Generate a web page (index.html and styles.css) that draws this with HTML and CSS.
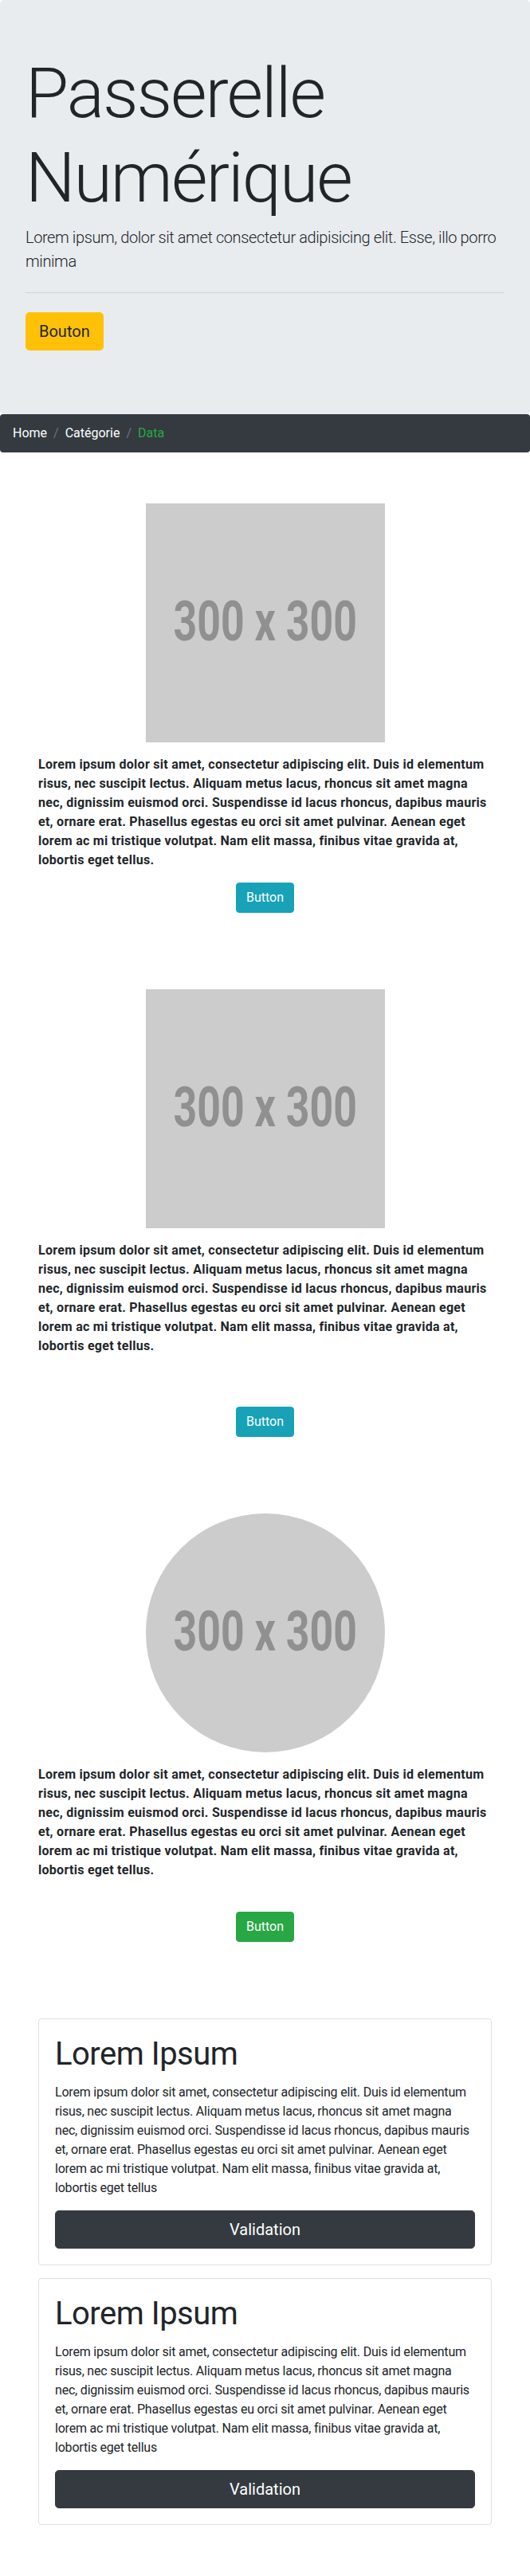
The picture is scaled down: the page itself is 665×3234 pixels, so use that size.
FILE: index.html
```html
<!DOCTYPE html>
<html lang="fr">
<head>
<meta charset="utf-8">
<title>Passerelle Numérique</title>
<link rel="stylesheet" href="styles.css">
</head>
<body>
  <header class="jumbotron">
    <h1 class="display-title">Passerelle Numérique</h1>
    <p class="lead">Lorem ipsum, dolor sit amet consectetur adipisicing elit. Esse, illo porro minima</p>
    <hr class="divider">
    <p class="lead-action"><a class="btn btn-lg btn-warning" href="#">Bouton</a></p>
  </header>

  <nav class="breadcrumb">
    <a class="crumb" href="#">Home</a>
    <a class="crumb" href="#">Catégorie</a>
    <span class="crumb crumb-active">Data</span>
  </nav>

  <section class="feature">
    <div class="placeholder"><span class="placeholder-text">300 x 300</span></div>
    <p class="feature-text">Lorem ipsum dolor sit amet, consectetur adipiscing elit. Duis id elementum risus, nec suscipit lectus. Aliquam metus lacus, rhoncus sit amet magna nec, dignissim euismod orci. Suspendisse id lacus rhoncus, dapibus mauris et, ornare erat. Phasellus egestas eu orci sit amet pulvinar. Aenean eget lorem ac mi tristique volutpat. Nam elit massa, finibus vitae gravida at, lobortis eget tellus.</p>
    <div class="feature-action"><a class="btn btn-info" href="#">Button</a></div>
  </section>

  <section class="feature">
    <div class="placeholder"><span class="placeholder-text">300 x 300</span></div>
    <p class="feature-text">Lorem ipsum dolor sit amet, consectetur adipiscing elit. Duis id elementum risus, nec suscipit lectus. Aliquam metus lacus, rhoncus sit amet magna nec, dignissim euismod orci. Suspendisse id lacus rhoncus, dapibus mauris et, ornare erat. Phasellus egestas eu orci sit amet pulvinar. Aenean eget lorem ac mi tristique volutpat. Nam elit massa, finibus vitae gravida at, lobortis eget tellus.</p>
    <div class="feature-action feature-action-lg"><a class="btn btn-info" href="#">Button</a></div>
  </section>

  <section class="feature">
    <div class="placeholder placeholder-round"><span class="placeholder-text">300 x 300</span></div>
    <p class="feature-text">Lorem ipsum dolor sit amet, consectetur adipiscing elit. Duis id elementum risus, nec suscipit lectus. Aliquam metus lacus, rhoncus sit amet magna nec, dignissim euismod orci. Suspendisse id lacus rhoncus, dapibus mauris et, ornare erat. Phasellus egestas eu orci sit amet pulvinar. Aenean eget lorem ac mi tristique volutpat. Nam elit massa, finibus vitae gravida at, lobortis eget tellus.</p>
    <div class="feature-action feature-action-md"><a class="btn btn-success" href="#">Button</a></div>
  </section>

  <section class="cards">
    <article class="card">
      <h1 class="card-title">Lorem Ipsum</h1>
      <p class="card-text">Lorem ipsum dolor sit amet, consectetur adipiscing elit. Duis id elementum risus, nec suscipit lectus. Aliquam metus lacus, rhoncus sit amet magna nec, dignissim euismod orci. Suspendisse id lacus rhoncus, dapibus mauris et, ornare erat. Phasellus egestas eu orci sit amet pulvinar. Aenean eget lorem ac mi tristique volutpat. Nam elit massa, finibus vitae gravida at, lobortis eget tellus</p>
      <a class="btn btn-lg btn-dark btn-block" href="#">Validation</a>
    </article>
    <article class="card">
      <h1 class="card-title">Lorem Ipsum</h1>
      <p class="card-text">Lorem ipsum dolor sit amet, consectetur adipiscing elit. Duis id elementum risus, nec suscipit lectus. Aliquam metus lacus, rhoncus sit amet magna nec, dignissim euismod orci. Suspendisse id lacus rhoncus, dapibus mauris et, ornare erat. Phasellus egestas eu orci sit amet pulvinar. Aenean eget lorem ac mi tristique volutpat. Nam elit massa, finibus vitae gravida at, lobortis eget tellus</p>
      <a class="btn btn-lg btn-dark btn-block" href="#">Validation</a>
    </article>
  </section>
</body>
</html>
```
FILE: styles.css
```css
* { box-sizing: border-box; }

body {
  margin: 0;
  font-family: Roboto, "Liberation Sans", Arial, sans-serif;
  font-size: 16px;
  line-height: 1.5;
  color: #212529;
  background: #fff;
}

/* ---------- jumbotron ---------- */
.jumbotron {
  background: #e9ecef;
  padding: 64px 32px;
  border-radius: 4.8px;
}
.display-title {
  margin: 0 0 8px;
  font-size: 88px;
  font-weight: 300;
  line-height: 1.2;
  letter-spacing: -2px;
}
.lead {
  margin: 0;
  font-size: 20px;
  font-weight: 300;
  line-height: 30px;
  letter-spacing: -0.4px;
}
.divider {
  margin: 24px 0;
  border: 0;
  border-top: 1px solid rgba(0, 0, 0, 0.1);
}
.lead-action {
  margin: 0 0 16px;
  font-size: 20px;
  line-height: 30px;
}

/* ---------- buttons ---------- */
.btn {
  display: inline-block;
  padding: 6px 12px;
  font-size: 16px;
  line-height: 24px;
  font-weight: 400;
  text-align: center;
  text-decoration: none;
  border: 1px solid transparent;
  border-radius: 4px;
  color: #fff;
}
.btn-lg {
  padding: 8px 16px;
  font-size: 20px;
  line-height: 30px;
  border-radius: 4.8px;
}
.btn-block { display: block; width: 100%; }
.btn-warning { background: #ffc107; border-color: #ffc107; color: #212529; }
.btn-info { background: #17a2b8; border-color: #17a2b8; }
.btn-success { background: #28a745; border-color: #28a745; }
.btn-dark { background: #343a40; border-color: #343a40; }

/* ---------- breadcrumb ---------- */
.breadcrumb {
  display: flex;
  flex-wrap: wrap;
  margin: 0 0 16px;
  padding: 12px 16px;
  background: #343a40;
  border-radius: 4px;
  line-height: 24px;
}
.crumb { color: #fff; text-decoration: none; }
.crumb + .crumb { padding-left: 8px; }
.crumb + .crumb::before {
  content: "/";
  display: inline-block;
  padding-right: 8px;
  color: #6c757d;
}
.crumb-active { color: #28a745; }

/* ---------- feature sections ---------- */
.feature {
  padding: 48px 48px;
  text-align: center;
}
.placeholder {
  display: flex;
  align-items: center;
  justify-content: center;
  width: 300px;
  height: 300px;
  margin: 0 auto 16px;
  background: #cccccc;
  overflow: hidden;
}
.placeholder-round { border-radius: 50%; }
.placeholder-text {
  display: inline-block;
  margin-top: -4px;
  font-family: Roboto, "Liberation Sans", sans-serif;
  font-size: 70px;
  font-weight: 700;
  line-height: 1;
  color: #909090;
  white-space: nowrap;
  transform: scaleX(0.74);
}
.feature-text {
  margin: 0 0 16px;
  text-align: left;
  font-weight: 700;
  letter-spacing: 0.28px;
}
.feature-action-lg { padding-top: 48px; }
.feature-action-md { padding-top: 24px; }

/* ---------- cards ---------- */
.cards {
  padding: 48px 0;
}
.card {
  margin: 0 48px 16px;
  padding: 20px;
  border: 1px solid rgba(0, 0, 0, 0.125);
  border-radius: 4px;
}
.card-title {
  margin: 0 0 12px;
  font-size: 40px;
  font-weight: 400;
  line-height: 48px;
  letter-spacing: -0.5px;
}
.card-text {
  margin: 0 0 16px;
  letter-spacing: -0.2px;
}
```
